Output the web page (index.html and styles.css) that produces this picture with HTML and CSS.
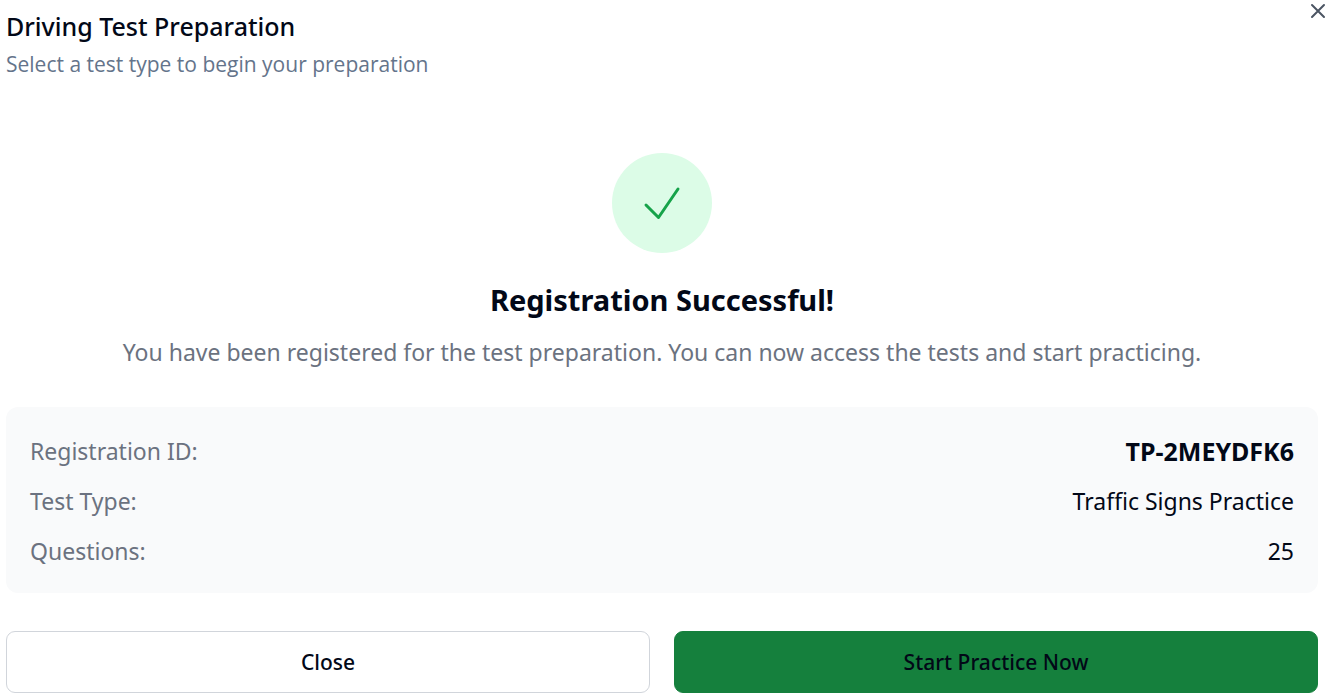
FILE: index.html
```html
<!DOCTYPE html>
<html lang="en">
<head>
<meta charset="utf-8">
<title>Driving Test Preparation</title>
<link rel="stylesheet" href="styles.css">
</head>
<body>
<main class="dialog">
  <header class="header">
    <div>
      <h1 class="title">Driving Test Preparation</h1>
      <p class="subtitle">Select a test type to begin your preparation</p>
    </div>
    <button class="dismiss" type="button" aria-label="Dismiss">
      <svg width="16" height="16" viewBox="0 0 16 16" fill="none" stroke="currentColor" stroke-width="2" stroke-linecap="round"><path d="M2 2l12 12M14 2L2 14"/></svg>
    </button>
  </header>
  <section class="success">
    <div class="badge">
      <svg width="50" height="50" viewBox="0 0 50 50" fill="none" stroke="currentColor" stroke-width="3" stroke-linecap="round" stroke-linejoin="round"><path d="M9 27L21.500 39.500L41 11"/></svg>
    </div>
    <h2 class="heading">Registration Successful!</h2>
    <p class="message">You have been registered for the test preparation. You can now access the tests and start practicing.</p>
  </section>
  <dl class="details">
    <div class="row"><dt>Registration ID:</dt><dd class="code">TP-2MEYDFK6</dd></div>
    <div class="row"><dt>Test Type:</dt><dd>Traffic Signs Practice</dd></div>
    <div class="row"><dt>Questions:</dt><dd>25</dd></div>
  </dl>
  <footer class="actions">
    <button class="button outline" type="button">Close</button>
    <button class="button primary" type="button">Start Practice Now</button>
  </footer>
</main>
</body>
</html>
```
FILE: styles.css
```css
* { box-sizing: border-box; }
body, h1, h2, p, dl, dd { margin: 0; }
body { background: #fff; color: #020817; font-family: "Segoe UI", "Noto Sans", sans-serif; }
.dialog { padding: 8px 13px 4px 6px; }
.header { display: flex; justify-content: space-between; align-items: flex-start; }
.title { font-size: 25px; line-height: 36px; font-weight: 500; }
.subtitle { margin-top: 4px; font-family: "Segoe UI", "Open Sans", sans-serif; font-size: 21px; line-height: 32px; color: #64748b; }
.dismiss { display: flex; padding: 0; margin: -5px -8px 0 0; border: 0; background: none; color: #4b5563; }
.success { display: flex; flex-direction: column; align-items: center; padding-top: 73px; text-align: center; }
.badge { display: grid; place-items: center; width: 100px; height: 100px; border-radius: 50%; background: #dcfce7; color: #16a34a; }
.heading { margin-top: 23px; font-size: 29px; line-height: 48px; font-weight: 700; }
.message { margin-top: 8px; font-size: 23px; line-height: 40px; color: #6b7280; }
.details { display: grid; gap: 12px; margin-top: 35px; padding: 25px 24px 23px; border-radius: 12px; background: #f9fafb; font-size: 23px; line-height: 38px; }
.row { display: flex; justify-content: space-between; }
.row dt { color: #6b7280; }
.code { font-size: 25px; font-weight: 700; }
.actions { display: grid; grid-template-columns: 1fr 1fr; gap: 24px; margin-top: 38px; }
.button { height: 62px; border: 1px solid #d1d5db; border-radius: 9px; background: #fff; color: #020817; font: 500 21px/32px "Segoe UI", "Noto Sans", sans-serif; }
.primary { border-color: #15803d; background: #15803d; }
```
